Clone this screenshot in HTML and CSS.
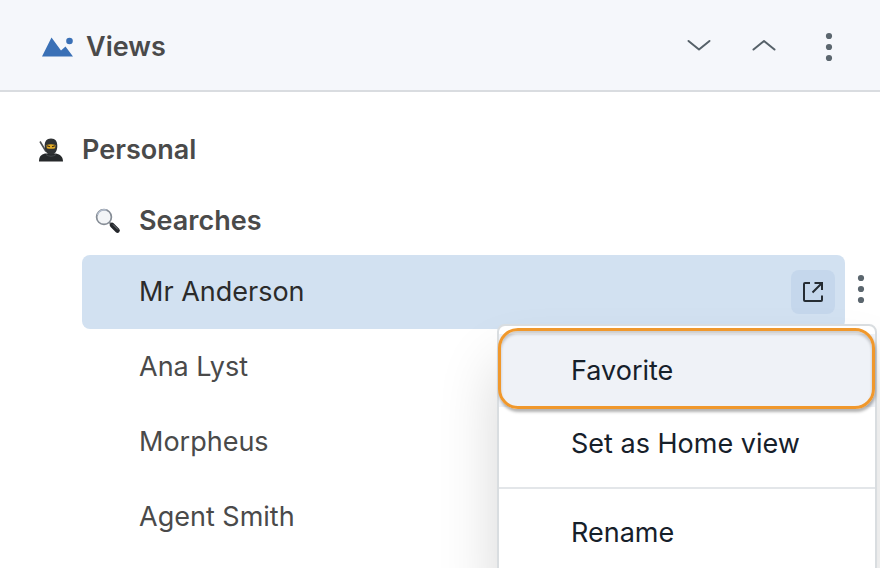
FILE: index.html
```html
<!DOCTYPE html>
<html lang="en">
<head>
<meta charset="utf-8">
<title>Views</title>
<link rel="stylesheet" href="styles.css">
</head>

<body>
    <!-- header -->
    <header class="header">
        <svg class="logo" width="32" height="20" viewBox="0 0 32 20"><path d="M0 19.500 9.500 .5 19 13.500 23.500 9.500 31 19.500z"/><circle cx="27.500" cy="4" r="3.300"/></svg>
        <h1 class="title">Views</h1>
        <div class="tools">
            <button type="button" class="icon-btn" aria-label="Expand all">
                <svg width="24" height="16" viewBox="0 0 24 16" class="line"><path d="M1.500 2 12 10.500 22.500 2"/></svg>
            </button>
            <button type="button" class="icon-btn" aria-label="Collapse all">
                <svg width="24" height="16" viewBox="0 0 24 16" class="line"><path d="M1.500 10.500 12 2 22.500 10.500"/></svg>
            </button>
            <button type="button" class="icon-btn" aria-label="More">
                <svg width="8" height="30" viewBox="0 0 8 30" class="dots"><circle cx="4" cy="4" r="3.100"/><circle cx="4" cy="15" r="3.100"/><circle cx="4" cy="26" r="3.100"/></svg>
            </button>
        </div>
    </header>

    <main class="tree">
        <h2 class="group">
            <svg class="emoji" width="26" height="26" viewBox="0 0 26 26">
                <path d="M2 4.500 8 14.500" stroke="#4a4e51" stroke-width="1.600"/>
                <path d="M1 24.500c0-5 2-7 6-8h11c4.500 1 7 3.500 7 8z" fill="#26292b"/>
                <path d="M13 1.500c4.500 0 6.500 3 6.300 7.500 0 5-2.300 8.500-6.300 8.500S6.700 14 6.700 9C6.500 4.500 8.500 1.500 13 1.500z" fill="#2f3234"/>
                <path d="M8.500 8q4.500-1.300 9 0l-.3 3.200q-4.200 1-8.400 0z" fill="#e3ac27"/>
                <path d="M9 8.800l3 .9M17 8.800l-3 .9" stroke="#3b2b12" stroke-width="1.200"/>
                <path d="M8 17.500q5 3.500 10 0" stroke="#45494c"/>
            </svg>
            <span>Personal</span>
        </h2>
        <section class="sub">
            <h3 class="group">
                <svg class="emoji" width="26" height="26" viewBox="0 0 26 26">
                    <path d="M14 14l3.500 3.500" stroke="#8c9299" stroke-width="2.200"/>
                    <path d="M17 17l5.500 5.500" stroke="#24272b" stroke-width="4.600" stroke-linecap="round"/>
                    <path d="M18 16.500l5 5" stroke="#777d84" stroke-width="1"/>
                    <circle cx="9" cy="9" r="7.400" fill="#f3f5f7" stroke="#858c95" stroke-width="1.700"/>
                    <path d="M2.500 7A7 7 0 0 1 11.500 2.200" stroke="#b3bdcc" stroke-width="1.500"/>
                </svg>
                <span>Searches</span>
            </h3>
            <ul class="list">
                <li class="row active">
                    <a href="#" class="name">Mr Anderson</a>
                    <button type="button" class="open" aria-label="Open in new window">
                        <svg width="22" height="22" viewBox="0 0 22 22"><path d="M8 2H3Q2 2 2 3V19Q2 20 3 20H19Q20 20 20 19V14.500M12.500 2H20V9M20 2 10.500 11.500"/></svg>
                    </button>
                    <button type="button" class="more" aria-label="View options">
                        <svg width="8" height="30" viewBox="0 0 8 30" class="dots"><circle cx="4" cy="4" r="3.100"/><circle cx="4" cy="15" r="3.100"/><circle cx="4" cy="26" r="3.100"/></svg>
                    </button>
                    <!-- context menu -->
                    <div class="menu">
                        <button type="button" class="item current">Favorite</button>
                        <button type="button" class="item">Set as Home view</button>
                        <hr class="line-sep">
                        <button type="button" class="item">Rename</button>
                    </div>
                </li>
                <li class="row"><a href="#" class="name">Ana Lyst</a></li>
                <li class="row"><a href="#" class="name">Morpheus</a></li>
                <li class="row"><a href="#" class="name">Agent Smith</a></li>
            </ul>
        </section>
    </main>
</body>

</html>
```
FILE: styles.css
```css
* { margin: 0; padding: 0; box-sizing: border-box; }
body { min-height: 100vh; overflow: hidden; background-color: #fff; color: #4a4a4a; font: 27px/36px Inter, "Liberation Sans", sans-serif; }
button { border: 0; background-color: transparent; font: inherit; color: inherit; cursor: pointer; }
svg { display: block; flex: none; }

/* header */
.header { display: flex; align-items: center; height: 92px; padding: 3px 38px 0 42px; border-bottom: 2px solid #d9dce0; background-color: #f5f7fb; }
.logo { fill: #3a70b6; }
.title { margin-left: 12px; font-size: 27px; font-weight: 600; }
.tools { display: flex; align-items: center; margin-left: auto; gap: 24px; }
.icon-btn { display: flex; align-items: center; justify-content: center; width: 41px; height: 40px; }
.icon-btn:last-child { width: 26px; margin-left: 8px; }
.line { fill: none; stroke: #566169; stroke-width: 2; stroke-linecap: round; stroke-linejoin: round; }
.dots { fill: #5b666e; }

/* tree */
.tree { padding: 22px 35px 0 38px; }
.group { display: flex; align-items: center; gap: 18px; height: 72px; font-size: 27px; font-weight: 600; }
.sub { padding-left: 44px; }
.sub .group { height: 69px; padding-left: 13px; }
.emoji { fill: none; }
.list { list-style: none; }
.row { position: relative; display: flex; align-items: center; height: 74px; margin-bottom: 1px; padding: 0 10px 0 57px; border-radius: 8px; }
.row.active { background-color: #d2e1f1; color: #2b2b2b; }
.name { flex: 1; color: inherit; text-decoration: none; }
.open { display: flex; align-items: center; justify-content: center; width: 44px; height: 44px; border-radius: 8px; background-color: #c5d7ec; }
.open svg { fill: none; stroke: #252c33; stroke-width: 2; }
.more { position: absolute; right: -24px; top: 14px; padding: 5px 4px; }

/* menu */
.menu { position: absolute; z-index: 1; top: 69px; right: -32px; width: 380px; padding: 8px 0; border: 2px solid #d9dde0; border-radius: 8px; background-color: #fff; box-shadow: 0 40px 60px rgba(0, 0, 0, .16); color: #16202a; }
.item { position: relative; display: block; width: 100%; height: 73px; padding: 0 72px; text-align: left; white-space: nowrap; }
.item.current { background-color: #eff2f7; }
.item.current:after { content: ""; position: absolute; top: -6px; right: 0; bottom: -2px; left: -1px; border: 3px solid #f0982c; border-radius: 20px; box-shadow: 1px 3px 3px rgba(0, 0, 0, .3), inset 0 3px 3px rgba(0, 0, 0, .2); }
.line-sep { height: 2px; margin: 7px 0; border: 0; background-color: #e3e6e9; }
```
